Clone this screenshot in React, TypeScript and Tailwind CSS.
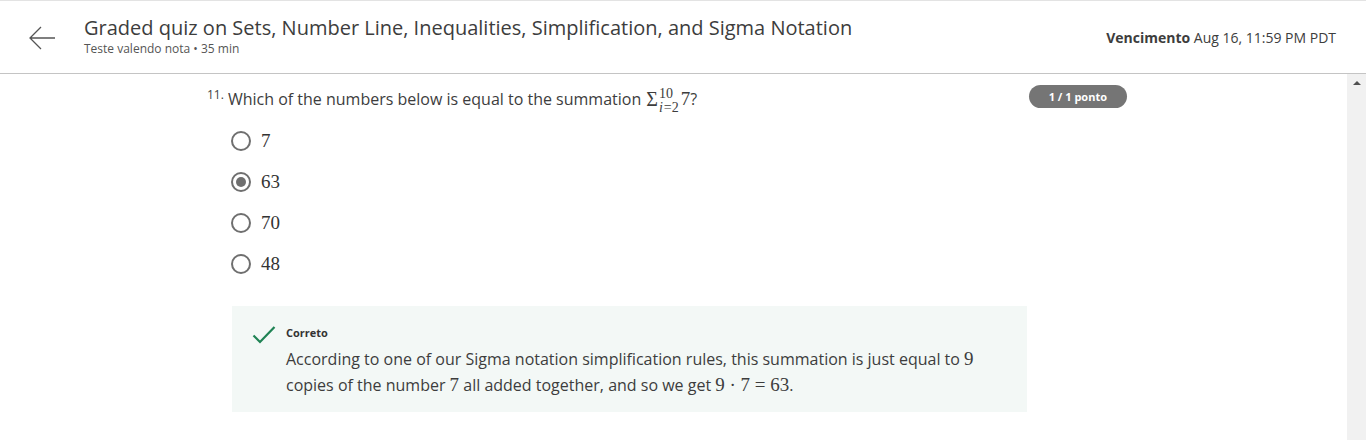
import React from 'react';

const options = ['7', '63', '70', '48'];

const Radio: React.FC<{ checked?: boolean }> = ({ checked }) => (
  <span className="flex h-[20px] w-[20px] items-center justify-center rounded-full border-2 border-[#6f6f6f] bg-white">
    {checked && <span className="h-[10px] w-[10px] rounded-full bg-[#6f6f6f]" />}
  </span>
);

const App: React.FC = () => {
  return (
    <div className="flex h-[440px] w-[1366px] flex-col overflow-hidden bg-white font-['Open_Sans',sans-serif] text-[#373a3c]">
      {/* Header */}
      <header className="flex h-[74px] shrink-0 items-center border-t border-b border-t-[#e3e3e3] border-b-[#c4c4c4] pl-[28px] pr-[30px]">
        <svg width="28" height="28" viewBox="0 0 28 28" className="mr-[28px] mt-[1px]">
          <path d="M27 14H3M13 3L2 14l11 11" fill="none" stroke="#555" strokeWidth="1.3" />
        </svg>
        <div className="flex-1 pb-[3px]">
          <h1 className="text-[20px] leading-[26px] text-[#3d3d3d]">
            Graded quiz on Sets, Number Line, Inequalities, Simplification, and Sigma Notation
          </h1>
          <p className="text-[12px] leading-[15px] text-[#555]">Teste valendo nota • 35 min</p>
        </div>
        <div className="text-[14px] text-[#3d3d3d]">
          <span className="font-bold">Vencimento</span> Aug 16, 11:59 PM PDT
        </div>
      </header>

      {/* Body */}
      <div className="flex flex-1">
        <main className="flex-1 pl-[207px] pt-[10px]">
          <div className="flex w-[920px] items-start justify-between">
            <div className="flex items-start">
              <span className="mr-[4px] mt-[2px] text-[12px] text-[#444]">11.</span>
              <p className="flex h-[30px] items-center text-[16px] leading-[30px] text-[#3d3d3d]">
                <span>Which of the numbers below is equal to the summation</span>
                <span className="ml-[5px] font-['Liberation_Serif',serif] text-[20px]">Σ</span>
                <span className="ml-[1px] mt-[3px] inline-flex flex-col font-['Liberation_Serif',serif] text-[14px] leading-[14px]">
                  <span>10</span>
                  <span className="flex">
                    <span className="italic">i</span>
                    <span className="ml-[1px]">=2</span>
                  </span>
                </span>
                <span className="ml-[2px] font-['Liberation_Serif',serif] text-[19px]">7</span>
                <span>?</span>
              </p>
            </div>
            <span className="mt-[1px] rounded-full bg-[#757575] px-[20px] py-[3px] text-[11px] font-bold leading-[17px] text-white">
              1 / 1 ponto
            </span>
          </div>

          <div className="mt-[16px] flex flex-col gap-[19px] pl-[24px]">
            {options.map((o) => (
              <label key={o} className="flex h-[22px] items-center gap-[10px]">
                <Radio checked={o === '63'} />
                <span className="font-['Liberation_Serif',serif] text-[19px] text-[#333]">{o}</span>
              </label>
            ))}
          </div>

          <div className="mt-[31px] ml-[25px] flex w-[795px] bg-[#f3f8f6] pb-[14px] pl-[20px] pt-[18px]">
            <svg width="24" height="20" viewBox="0 0 24 20" className="mr-[10px] mt-[1px]">
              <path d="M1.5 10.5l6.5 6.5L22.5 2" fill="none" stroke="#1f8354" strokeWidth="2.2" />
            </svg>
            <div>
              <p className="text-[11px] font-bold leading-[18px] text-[#333]">Correto</p>
              <p className="mt-[4px] w-[700px] text-[16px] leading-[25px] text-[#3d3d3d]">
                According to one of our Sigma notation simplification rules, this summation is just equal to{' '}
                <span className="font-['Liberation_Serif',serif] text-[19px]">9</span> copies of the number{' '}
                <span className="font-['Liberation_Serif',serif] text-[19px]">7</span> all added together, and so we get{' '}
                <span className="font-['Liberation_Serif',serif] text-[19px]">9 · 7 = 63</span>.
              </p>
            </div>
          </div>
        </main>

        {/* Scrollbar */}
        <div className="flex w-[19px] justify-center bg-[#f1f1f1] pt-[7px]">
          <span className="h-0 w-0 border-x-[4px] border-b-[4px] border-x-transparent border-b-[#505050]" />
        </div>
      </div>
    </div>
  );
};

export default App;
